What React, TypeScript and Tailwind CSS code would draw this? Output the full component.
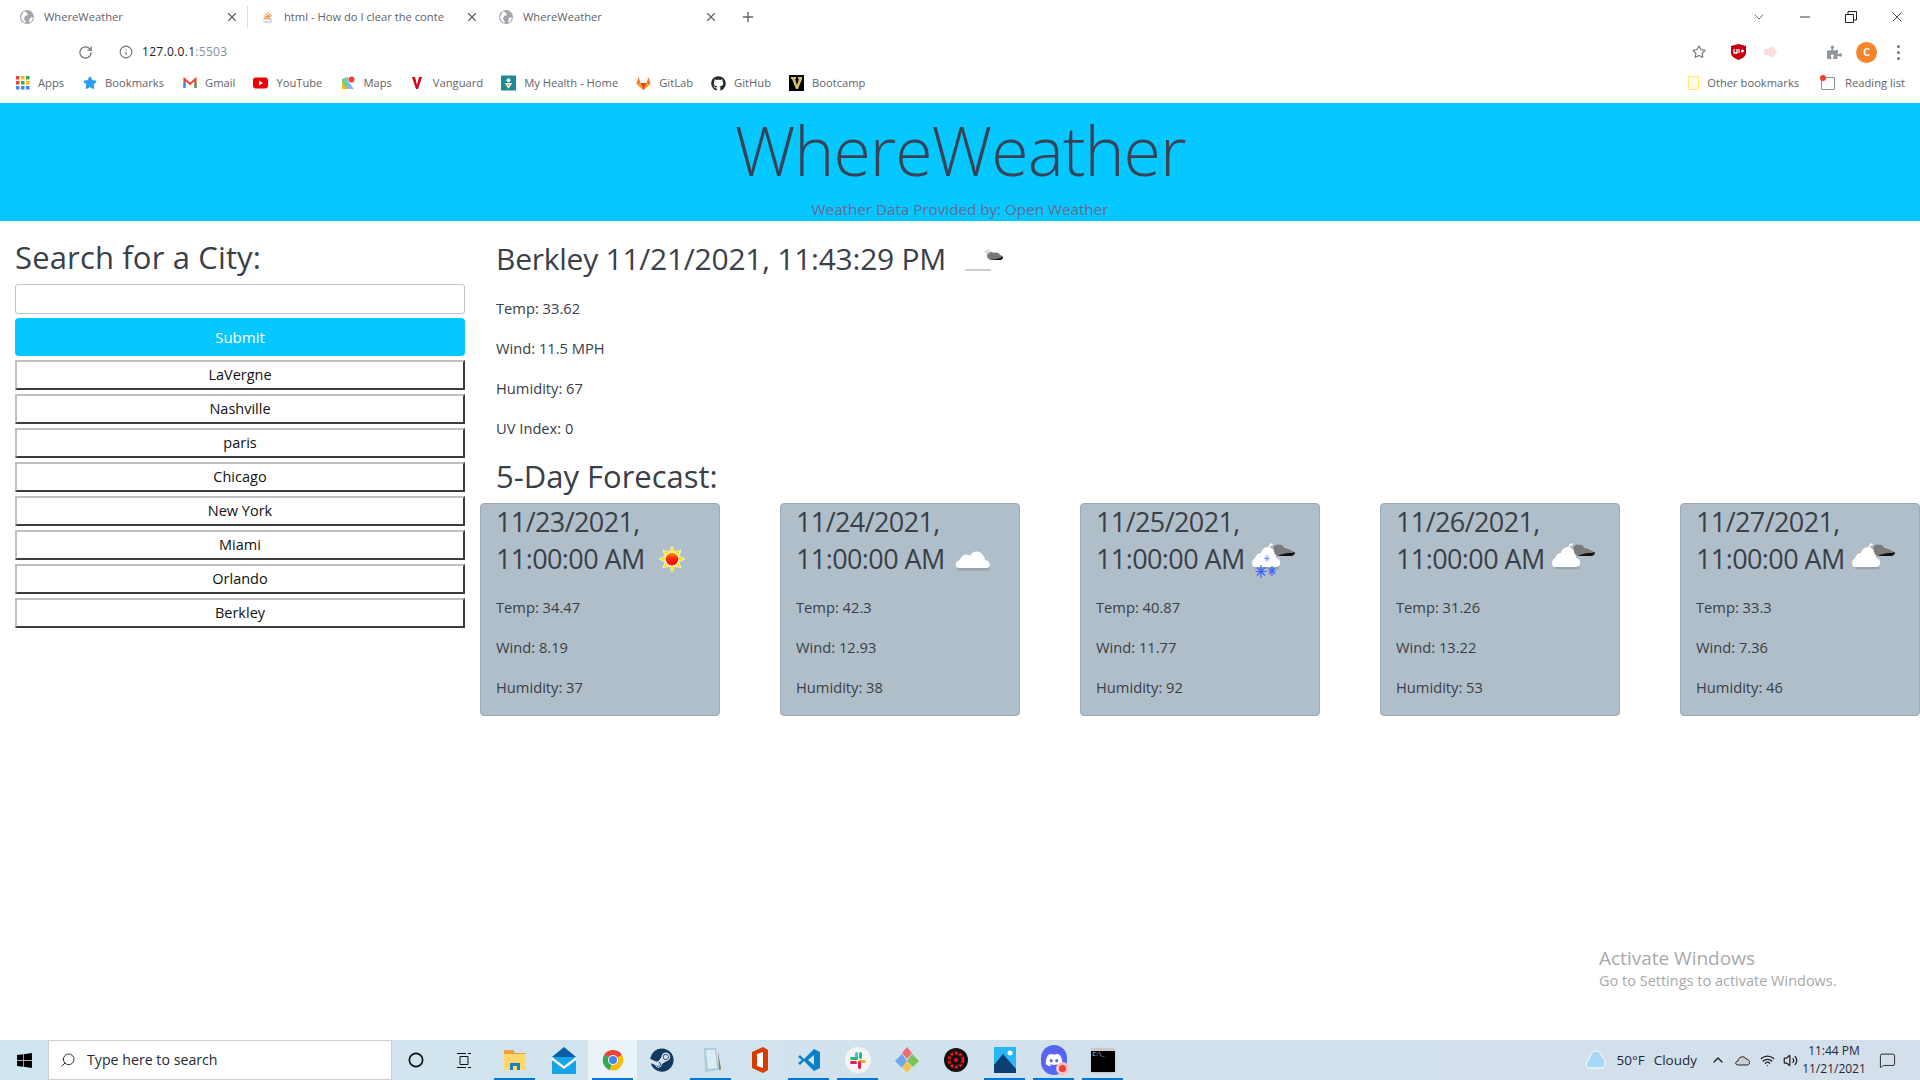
import React from "react";
import { FaGithub, FaWindows, FaSteam, FaDiscord, FaPuzzlePiece } from "react-icons/fa";
import { X, Plus, RotateCw, Info, Star, ChevronDown, Minus, ChevronUp, Search, Volume2, Wifi, MessageSquare, Circle } from "lucide-react";

const cities = ["LaVergne", "Nashville", "paris", "Chicago", "New York", "Miami", "Orlando", "Berkley"];

const SunIcon = () => (
  <svg width="30" height="30" viewBox="3 3 30 30">
    <defs>
      <linearGradient id="sunfill" x1="0" y1="0" x2="0" y2="1">
        <stop offset="0" stopColor="#ffb000" />
        <stop offset="0.5" stopColor="#ff2000" />
        <stop offset="1" stopColor="#f00" />
      </linearGradient>
    </defs>
    <polygon
      points="18,5 21,11 27,9 25,15 31,18 25,21 27,27 21,25 18,31 15,25 9,27 11,21 5,18 11,15 9,9 15,11"
      fill="#ffe600"
      stroke="#fff"
      strokeWidth="0.6"
    />
    <circle cx="18" cy="18" r="7" fill="url(#sunfill)" stroke="#fff" strokeWidth="1.2" />
  </svg>
);

const CloudIcon = () => (
  <svg width="36" height="24" viewBox="0 0 36 24">
    <path d="M2 22h32" stroke="#98a3ac" strokeWidth="3" />
    <path d="M4 21c-4 0-5-7 1-8 1-5 7-7 10-4 3-6 11-6 14 1 1 1 1 2 1 3 5 0 7 8 1 8z" fill="#fff" />
  </svg>
);

const MixedIcon = ({ snow }: { snow?: boolean }) => (
  <svg width="44" height="38" viewBox="0 0 44 38" className="mt-[2px]">
    <path d="M3 27h24" stroke="#98a3ac" strokeWidth="2.500" />
    <path d="M3 26c-4 0-4-7 0-9 1-3 3-5 6-5 1-4 4-6 7-6 5 1 8 5 8 11 5 0 6 9 0 9z" fill="#fff" />
    <path d="M15 8l3-5 2-1 1 2-3 1-1 5z" fill="#fff" />
    <path d="M21 6c2-2 4-3 6-2 2-1 5 1 5 3 3 0 8 2 11 5 0 2-2 4-5 3H27c-2 0-5-2-5-5 0-1-1-3-1-4z" fill="#7b7b7b" />
    <path d="M26 15h12c3 0 5-2 5-4-2 1-4 1-7 1-4 1-7 1-10 3z" fill="#111" />
    {snow && (
      <g stroke="#3a63ff" strokeWidth="1.200">
        <path d="M9 24v13M3.500 30.500h11M5 26.500l8 8M13 26.500l-8 8" />
        <path d="M20 25v10M16 30h8M17 27l6 6M23 27l-6 6" />
        <path d="M15 14v7M12 17.500h6M13 15.500l4 4M17 15.500l-4 4" stroke="#6f8cff" strokeWidth="0.8" />
      </g>
    )}
  </svg>
);

const forecast = [
  { date: "11/23/2021,", temp: "34.47", wind: "8.19", hum: "37", icon: <SunIcon />, gap: "ml-[12px]" },
  { date: "11/24/2021,", temp: "42.3", wind: "12.93", hum: "38", icon: <CloudIcon />, gap: "ml-[10px]" },
  { date: "11/25/2021,", temp: "40.87", wind: "11.77", hum: "92", icon: <MixedIcon snow />, gap: "ml-[7px]" },
  { date: "11/26/2021,", temp: "31.26", wind: "13.22", hum: "53", icon: <MixedIcon />, gap: "ml-[7px]" },
  { date: "11/27/2021,", temp: "33.3", wind: "7.36", hum: "46", icon: <MixedIcon />, gap: "ml-[7px]" },
];

const Globe = () => (
  <svg width="14" height="14" viewBox="0 0 14 14">
    <circle cx="7" cy="7" r="7" fill="#a3a7ab" />
    <path d="M4 1l3 2 1 2-3 1-1 3 2 3-1 1-3-3-1-3zM10 8l2-1 1 1-2 4-2 0z" fill="#fff" />
  </svg>
);

const StackIcon = () => (
  <svg width="14" height="14" viewBox="0 0 14 14" fill="none">
    <path d="M3 9h8v3H3" stroke="#b8b8b8" strokeWidth="1" />
    <path d="M4 8l6 0M4.500 6l5.500 1M5.500 4l5 2.500M7.500 2l4 4" stroke="#f48024" strokeWidth="1" />
  </svg>
);

const Tab = ({ icon, title }: { icon: React.ReactNode; title: string }) => (
  <div className="flex items-center h-full w-[239px] pl-[12px] pr-[8px]">
    {icon}
    <span className="ml-[10px] flex-1 truncate text-[11.200px] text-[#5f6368]">{title}</span>
    <X size={14} className="text-[#5f6368] ml-[6px]" />
  </div>
);

const Apps = () => (
  <svg width="14" height="14" viewBox="0 0 14 14">
    {[0, 5, 10].map((x, i) =>
      [0, 5, 10].map((y, j) => (
        <rect
          key={`${i}${j}`}
          x={x}
          y={y}
          width="3.500"
          height="3.500"
          fill={["#ea4335", "#ea4335", "#4285f4", "#fbbc05", "#34a853", "#4285f4", "#34a853", "#fbbc05", "#4285f4"][i * 3 + j]}
        />
      )),
    )}
  </svg>
);

const bookmarks: { label: string; icon: React.ReactNode }[] = [
  { label: "Apps", icon: <Apps /> },
  { label: "Bookmarks", icon: <Star size={14} fill="#2a9df4" className="text-[#2a9df4]" /> },
  {
    label: "Gmail",
    icon: (
      <svg width="14" height="14" viewBox="0 0 14 14" fill="none">
        <path d="M1.500 12V3L7 8l5.500-5v9" stroke="#ea4335" strokeWidth="2" />
        <path d="M1.500 6v6" stroke="#4285f4" strokeWidth="2" />
        <path d="M12.500 6v6" stroke="#34a853" strokeWidth="2" />
      </svg>
    ),
  },
  {
    label: "YouTube",
    icon: (
      <svg width="15" height="14" viewBox="0 0 15 14">
        <rect y="1.500" width="15" height="11" rx="3" fill="#e00" />
        <path d="M6 4.500l4 2.500-4 2.500z" fill="#fff" />
      </svg>
    ),
  },
  {
    label: "Maps",
    icon: (
      <svg width="14" height="14" viewBox="0 0 14 14">
        <path d="M1 3l6-2v12l-6-0z" fill="#6fcf97" />
        <path d="M7 13L1 7v6z" fill="#fbbc05" />
        <path d="M7 5l6 8H7z" fill="#8ab4f8" />
        <circle cx="10.500" cy="3.500" r="3" fill="#ea4335" />
      </svg>
    ),
  },
  {
    label: "Vanguard",
    icon: (
      <svg width="14" height="14" viewBox="0 0 14 14">
        <path d="M2 1h3l2 8 2-8h3L8 13H6z" fill="#d6001c" />
      </svg>
    ),
  },
  {
    label: "My Health - Home",
    icon: (
      <svg width="16" height="16" viewBox="0 0 16 16">
        <rect width="16" height="16" fill="#1f8a94" />
        <circle cx="8" cy="5" r="2" fill="#fff" />
        <path d="M4 8h8l-4 6z" fill="#fff" />
        <path d="M6 9h4l-2 3z" fill="#f3b33d" />
      </svg>
    ),
  },
  {
    label: "GitLab",
    icon: (
      <svg width="15" height="14" viewBox="0 0 15 14">
        <path d="M7.500 14L0.500 8 2.500 1l2 6h6l2-6 2 7z" fill="#fc6d26" />
        <path d="M7.500 14L4.500 7h6z" fill="#e24329" />
        <path d="M7.500 14L0.500 8l4-1zM7.500 14l7-6-4-1z" fill="#fca326" />
      </svg>
    ),
  },
  { label: "GitHub", icon: <FaGithub size={15} className="text-[#24292e]" /> },
  {
    label: "Bootcamp",
    icon: (
      <svg width="15" height="16" viewBox="0 0 15 16">
        <rect width="15" height="16" fill="#000" />
        <path d="M2 2h5v2H6l2 6 2-6H9V2h4v2l-4 10H7L3 4H2z" fill="#d7c06a" />
      </svg>
    ),
  },
];

const ChromeIcon = () => (
  <svg width="24" height="24" viewBox="0 0 24 24">
    <path d="M12 12L3 7a10.500 10.500 0 0 1 18 0z" fill="#ea4335" />
    <path d="M12 12L3 7a10.500 10.500 0 0 0 6 15z" fill="#34a853" />
    <path d="M12 12l9-5a10.500 10.500 0 0 1-12 15z" fill="#fbbc05" />
    <circle cx="12" cy="12" r="5" fill="#fff" />
    <circle cx="12" cy="12" r="4" fill="#4285f4" />
  </svg>
);

const taskIcons: { key: string; icon: React.ReactNode; on?: boolean; active?: boolean }[] = [
  {
    key: "explorer",
    on: true,
    icon: (
      <svg width="24" height="24" viewBox="0 0 24 24">
        <path d="M1 2h9l2 3h11v3H1z" fill="#e8a33d" />
        <path d="M1 6h22v16H1z" fill="#ffd76b" />
        <path d="M7 15h10v7h-3v-4h-4v4H7z" fill="#1b7fc4" />
      </svg>
    ),
  },
  {
    key: "mail",
    icon: (
      <svg width="24" height="28" viewBox="0 0 24 28">
        <path d="M0 11L12 1l12 10z" fill="#0b5ea8" />
        <rect y="11" width="24" height="17" fill="#16a3e8" />
        <path d="M0 11l12 9 12-9v3l-12 9L0 14z" fill="#fff" />
      </svg>
    ),
  },
  { key: "chrome", on: true, active: true, icon: <ChromeIcon /> },
  { key: "steam", icon: <FaSteam size={24} className="text-[#12395f]" /> },
  {
    key: "notepad",
    on: true,
    icon: (
      <svg width="24" height="26" viewBox="0 0 24 26">
        <path d="M5 1h12l3 22-14 2z" fill="#a9cfdc" />
        <path d="M7 3h9l2 18-9 1z" fill="#dcecf2" />
        <path d="M19 4l3 18-2 1z" fill="#8b7a5e" />
      </svg>
    ),
  },
  {
    key: "office",
    icon: (
      <svg width="20" height="26" viewBox="0 0 20 26">
        <path d="M2 5l11-5 5 3v20l-5 3-11-5z" fill="#d83b01" />
        <path d="M7 7l6-2v16l-6-2z" fill="#fff" />
      </svg>
    ),
  },
  {
    key: "vscode",
    on: true,
    icon: (
      <svg width="24" height="24" viewBox="0 0 24 24">
        <path d="M17 1l6 3v16l-6 3L7 13l-4 4-2-2 4-3-4-3 2-2 4 4z" fill="#0a7fca" />
        <path d="M17 7v10l-6-5z" fill="#d0e4ef" />
      </svg>
    ),
  },
  {
    key: "slack",
    on: true,
    icon: (
      <svg width="26" height="26" viewBox="0 0 26 26">
        <circle cx="13" cy="13" r="13" fill="#f4f4f4" />
        <rect x="10" y="5" width="3" height="8" rx="1.500" fill="#36c5f0" />
        <rect x="13" y="13" width="8" height="3" rx="1.500" fill="#ecb22e" />
        <rect x="13" y="14" width="3" height="8" rx="1.500" fill="#e01e5a" />
        <rect x="5" y="10" width="8" height="3" rx="1.500" fill="#2eb67d" />
        <rect x="5" y="14" width="7" height="3" rx="1.500" fill="#e01e5a" />
        <rect x="14" y="5" width="3" height="7" rx="1.500" fill="#2eb67d" />
      </svg>
    ),
  },
  {
    key: "kraken",
    icon: (
      <svg width="26" height="26" viewBox="0 0 26 26">
        <path d="M13 0l5 6-5 6-5-6z" fill="#ee6c6c" />
        <path d="M18 7l7 7-6 6-6-6z" fill="#7ac35a" />
        <path d="M8 7l5 7-5 7-7-7z" fill="#6ea6f0" />
        <path d="M13 14l5 6-5 6-5-6z" fill="#f2c650" />
      </svg>
    ),
  },
  {
    key: "davinci",
    icon: (
      <svg width="24" height="24" viewBox="0 0 24 24">
        <circle cx="12" cy="12" r="12" fill="#111" />
        <circle cx="12" cy="12" r="7" fill="none" stroke="#e11" strokeWidth="3" strokeDasharray="3 1.500" />
        <circle cx="12" cy="12" r="2" fill="#e11" />
      </svg>
    ),
  },
  {
    key: "photos",
    on: true,
    icon: (
      <svg width="22" height="26" viewBox="0 0 22 26">
        <rect width="22" height="26" fill="#29b6f6" />
        <path d="M0 26V18L9 7l13 15v4z" fill="#0d3f73" />
        <circle cx="16" cy="6" r="2.500" fill="#fff" />
      </svg>
    ),
  },
  {
    key: "discord",
    on: true,
    icon: (
      <div className="relative flex items-center justify-center w-[26px] h-[30px] rounded-full bg-[#5865f2]">
        <FaDiscord size={18} className="text-white" />
        <span className="absolute -right-[2px] bottom-0 w-[13px] h-[13px] rounded-full bg-[#e8403a] border-[3px] border-[#f8c0b8]" />
      </div>
    ),
  },
  {
    key: "terminal",
    on: true,
    icon: (
      <div className="w-[24px] h-[24px] bg-black border-t-[3px] border-[#c8c8c8] shadow-sm pt-[2px] pl-[2px] text-[5px] leading-none text-white font-['Liberation_Mono',monospace]">
        C:\_
      </div>
    ),
  },
];

const Stat = ({ children }: { children: React.ReactNode }) => (
  <p className="text-[14.700px] leading-[20px] mb-[20px]">{children}</p>
);

export default function App() {
  return (
    <div className="relative h-screen w-full flex flex-col overflow-hidden bg-white text-[#3a4047] font-['Open_Sans','Noto_Sans',sans-serif]">
      {/* browser chrome */}
      <div className="h-[34px] flex items-center pl-[8px] pr-[15px]">
        <Tab icon={<Globe />} title="WhereWeather" />
        <div className="w-px h-[22px] bg-[#dcdcdc]" />
        <Tab icon={<StackIcon />} title="html - How do I clear the conte" />
        <Tab icon={<Globe />} title="WhereWeather" />
        <Plus size={16} className="ml-[14px] text-[#5f6368]" />
        <ChevronDown size={16} className="ml-auto text-[#555]" strokeWidth={1.3} />
        <Minus size={16} className="ml-[30px] text-[#222]" strokeWidth={1.300} />
        <svg width="12" height="12" viewBox="0 0 12 12" fill="none" className="ml-[32px]" stroke="#222">
          <path d="M0.500 3.500h8v8h-8zM3 3.500V0.500h8.500V9H8.500" />
        </svg>
        <X size={16} className="ml-[32px] text-[#222]" strokeWidth={1.2} />
      </div>
      <div className="h-[36px] flex items-center pl-[78px] pr-[20px]">
        <RotateCw size={15} className="text-[#70757a]" />
        <Info size={14} className="ml-[26px] text-[#70757a]" />
        <span className="ml-[9px] text-[12px] tracking-[0.3px] text-[#222]">
          127.0.0.1<span className="text-[#8a8f94]">:5503</span>
        </span>
        <Star size={14} className="ml-auto text-[#70757a]" />
        <svg width="15" height="16" viewBox="0 0 15 16" className="ml-[25px]">
          <path d="M0 2l7.500-2L15 2v7c0 3-3 5-7.500 7C3 14 0 12 0 9z" fill="#c4000f" />
          <path d="M3 5v4h3V5M8 5v4M10 7h3M11.500 5.500v3" stroke="#fff" strokeWidth="1.300" fill="none" />
        </svg>
        <svg width="15" height="14" viewBox="0 0 15 14" className="ml-[17px]">
          <path d="M1 4h4l5-3 4 6-4 6-5-3H1z" fill="#fbdcdc" />
        </svg>
        <FaPuzzlePiece size={15} className="ml-[49px] text-[#8f959b]" />
        <div className="ml-[14px] w-[21px] h-[21px] rounded-full bg-[#f4852b] flex items-center justify-center text-[11px] font-bold text-white">
          C
        </div>
        <div className="ml-[20px] flex flex-col gap-[3px]">
          <span className="w-[3px] h-[3px] rounded-full bg-[#70757a]" />
          <span className="w-[3px] h-[3px] rounded-full bg-[#70757a]" />
          <span className="w-[3px] h-[3px] rounded-full bg-[#70757a]" />
        </div>
      </div>
      <div className="h-[33px] flex items-center pl-[15px] pr-[15px] pb-[6px] text-[11.200px] text-[#5f6368]">
        <div className="flex items-center gap-[18px]">
          {bookmarks.map((b) => (
            <div key={b.label} className="flex items-center gap-[8px]">
              <span className="w-[15px] flex justify-center">{b.icon}</span>
              <span>{b.label}</span>
            </div>
          ))}
        </div>
        <div className="ml-auto flex items-center gap-[8px]">
          <div className="w-[11px] h-[14px] border border-[#ffe97a] bg-[#fffde8]" />
          <span>Other bookmarks</span>
          <div className="relative ml-[14px] w-[14px] h-[13px] border border-[#8a8f94] rounded-[1px]">
            <span className="absolute -left-[2px] -top-[3px] w-[6px] h-[6px] rounded-full bg-[#f04030]" />
          </div>
          <span className="ml-[2px]">Reading list</span>
        </div>
      </div>

      {/* page */}
      <header className="h-[118px] bg-[#04c8ff] flex flex-col items-center">
        <h1 className="mt-[4px] text-[68px] leading-[86px] font-light tracking-[-1px] text-[#3a4256]">WhereWeather</h1>
        <p className="mt-[6px] text-[15.200px] leading-[20px] text-[#6d6890]">Weather Data Provided by: Open Weather</p>
      </header>

      <main className="flex-1 flex min-h-0">
        <aside className="w-[480px] px-[15px]">
          <h2 className="mt-[18px] text-[31px] leading-[37px] tracking-[0.15px] mb-[8px]">Search for a City:</h2>
          <input className="block w-full h-[30px] border border-[#c4c4c4] rounded-[3px] bg-white" />
          <button className="mt-[4px] w-full h-[38px] rounded-[4px] bg-[#04c8ff] text-white text-[15px]">Submit</button>
          <div className="mt-[4px] flex flex-col gap-[4px]">
            {cities.map((c) => (
              <button
                key={c}
                className="h-[30px] border-2 border-t-[#c0c0c0] border-l-[#c0c0c0] border-r-[#3c3c3c] border-b-[#3c3c3c] bg-white text-[14.500px] text-[#111]"
              >
                {c}
              </button>
            ))}
          </div>
        </aside>
        <section className="flex-1 min-w-0">
          <div className="pl-[16px]">
            <div className="mt-[19px] mb-[21px] flex items-center h-[37px]">
              <h2 className="text-[30px] leading-[37px] tracking-[-0.25px]">Berkley 11/21/2021, 11:43:29 PM</h2>
              <svg width="40" height="26" viewBox="0 0 40 26" className="ml-[18px] mt-[2px]">
                <path d="M1 23h26" stroke="#b9bec3" strokeWidth="1.500" />
                <path d="M20 5l4-3 3 2-3 4z" fill="#ddd" />
                <path d="M23 8c2-3 5-4 7-2 3-1 5 0 6 2 3 0 3 5 0 5H28c-3 0-5-2-5-5z" fill="#777" />
                <path d="M26 13h10c3 0 3-3 3-4-3 3-8 3-13 4z" fill="#111" />
              </svg>
            </div>
            <Stat>Temp: 33.62</Stat>
            <Stat>Wind: 11.5 MPH</Stat>
            <Stat>Humidity: 67</Stat>
            <Stat>UV Index: 0</Stat>
            <h2 className="mt-[2px] text-[31px] leading-[37px]">5-Day Forecast:</h2>
          </div>
          <div className="mt-[8px] flex justify-between">
            {forecast.map((f) => (
              <div key={f.date} className="w-[240px] h-[213px] rounded-[4px] border border-[#9caab4] bg-[#b0bec9] px-[15px]">
                <div className="-mt-[1px] text-[27px] leading-[37px] tracking-[-0.6px] whitespace-nowrap">
                  {f.date}
                  <div className="flex items-center h-[37px]">
                    11:00:00 AM
                    <span className={f.gap}>{f.icon}</span>
                  </div>
                </div>
                <div className="mt-[20px]">
                  <Stat>Temp: {f.temp}</Stat>
                  <Stat>Wind: {f.wind}</Stat>
                  <Stat>Humidity: {f.hum}</Stat>
                </div>
              </div>
            ))}
          </div>
        </section>
      </main>

      {/* activation watermark */}
      <div className="absolute left-[1599px] top-[945px] text-[#a9a9a9]">
        <p className="text-[19px] leading-[26px]">Activate Windows</p>
        <p className="text-[14.500px] leading-[20px]">Go to Settings to activate Windows.</p>
      </div>

      {/* taskbar */}
      <footer className="h-[40px] flex items-center bg-linear-to-r from-[#cfe5ef] to-[#d4dfeb] text-[#1d2a36]">
        <div className="w-[48px] flex justify-center">
          <FaWindows size={17} className="text-black" />
        </div>
        <div className="w-[344px] h-full flex items-center bg-white border border-[#cfcfcf] pl-[11px] text-[14.200px]">
          <Search size={16} className="-scale-x-100 text-[#222]" strokeWidth={1.400} />
          <span className="ml-[11px]">Type here to search</span>
        </div>
        <div className="w-[48px] flex justify-center">
          <Circle size={16} strokeWidth={2.500} className="text-[#111]" />
        </div>
        <div className="w-[48px] flex justify-center">
          <svg width="16" height="17" viewBox="0 0 16 17" fill="none" stroke="#111">
            <path d="M4 4.500h8v8H4zM1 1.500h9M12 1.500h3M1 15.500h9M12 15.500h3" />
          </svg>
        </div>
        <div className="flex ml-[2px]">
          {taskIcons.map((t) => (
            <div
              key={t.key}
              className={`relative w-[49px] h-[40px] flex items-center justify-center ${t.active ? "bg-[#e8f2f7]" : ""}`}
            >
              {t.icon}
              {t.on && <span className="absolute bottom-0 left-[4px] right-[4px] h-[2px] bg-[#0078d7]" />}
            </div>
          ))}
        </div>
        <div className="ml-auto flex items-center">
          <svg width="22" height="22" viewBox="0 0 22 22">
            <path d="M4 19c-4 0-4-7 0-8 1-5 4-9 7-9 4 0 5 4 6 6 4 1 4 10 0 11z" fill="#a8d8f5" stroke="#fff" />
          </svg>
          <span className="ml-[9px] text-[13.500px]">50°F</span>
          <span className="ml-[9px] text-[13.500px]">Cloudy</span>
          <ChevronUp size={16} className="ml-[13px] text-[#222]" />
          <svg width="16" height="12" viewBox="0 0 16 12" className="ml-[9px]" fill="none" stroke="#222">
            <path d="M3 11c-3 0-3-4 0-4 0-4 6-6 8-2 4 0 5 6 1 6z" fill="#cfcfcf" />
          </svg>
          <Wifi size={15} className="ml-[9px] text-[#222]" />
          <Volume2 size={15} className="ml-[8px] text-[#222]" />
          <div className="ml-[3px] w-[66px] text-center text-[12px] leading-[18px]">
            <div>11:44 PM</div>
            <div>11/21/2021</div>
          </div>
          <MessageSquare size={17} strokeWidth={1.200} className="ml-[12px] mr-[24px] text-[#111]" />
        </div>
      </footer>
    </div>
  );
}
